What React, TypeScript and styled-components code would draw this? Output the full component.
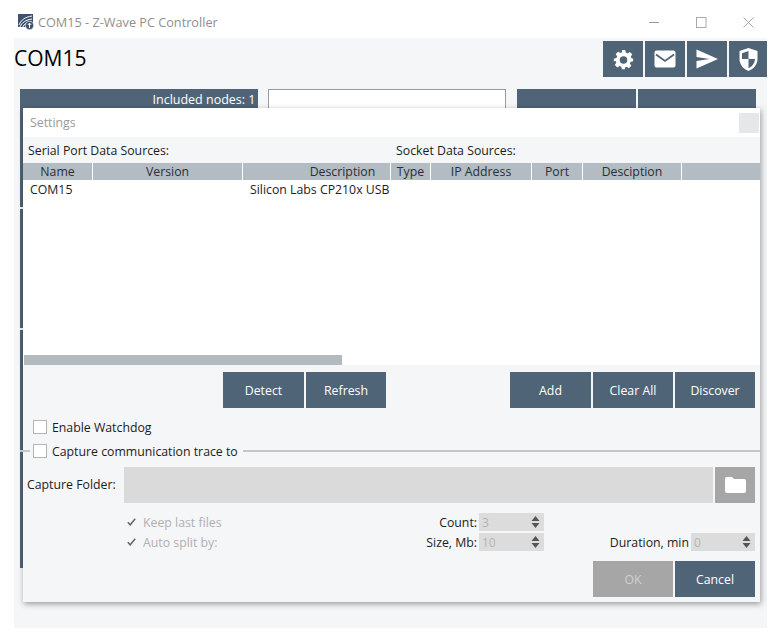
import React from "react";
import styled, { createGlobalStyle } from "styled-components";

const Global = createGlobalStyle`
  html, body { margin: 0; padding: 0; background: #fff; }
  body { font-family: "Open Sans", "Noto Sans", sans-serif; font-size: 12.3px; color: #1c1c1c; }
  * { box-sizing: border-box; }
`;

const Win = styled.div`
  width: 779px;
  height: 632px;
  overflow: hidden;
  background: #fff;
`;
const TitleBar = styled.div`
  height: 38px;
  display: flex;
  align-items: center;
  padding: 6px 0 0 18px;
`;
const TitleText = styled.span`
  margin-left: 4px;
  font-size: 12.7px;
  color: #8f8f8f;
`;
const WinControls = styled.div`
  margin-left: auto;
  display: flex;
  gap: 36px;
  padding-right: 25px;
`;
const Body = styled.div`
  position: relative;
  margin-left: 14px;
  width: 753px;
  height: 590px;
  background: #f5f6f7;
  padding-top: 3px;
`;
const HeaderRow = styled.div`
  display: flex;
  justify-content: space-between;
  align-items: center;
  height: 36px;
`;
const Heading = styled.h1`
  margin: 0 0 2px 0;
  font-size: 21px;
  font-weight: 400;
  color: #000;
`;
const Toolbar = styled.div`
  display: flex;
  gap: 2px;
`;
const ToolButton = styled.div<{ $w?: number }>`
  width: ${(p) => p.$w ?? 40}px;
  height: 36px;
  background: #506478;
  display: flex;
  align-items: center;
  justify-content: center;
`;
const Backdrop = styled.div`
  display: flex;
  margin: 12px 11px 0 6px;
  gap: 10px;
`;
const SideColumn = styled.div`
  width: 238px;
  display: flex;
  flex-direction: column;
  gap: 2px;
`;
const SideBlock = styled.div<{ $h: number }>`
  height: ${(p) => p.$h}px;
  background: #506478;
  color: #fff;
  text-align: right;
  padding: 2px 2px 0 0;
  font-size: 12.5px;
`;
const SearchBox = styled.div`
  width: 239px;
  height: 32px;
  background: #fff;
  border: 1px solid #9a9a9a;
`;
const NodeButtons = styled.div`
  display: flex;
  gap: 2px;
  margin-left: 1px;
`;
const NodeButton = styled.div`
  width: 118.5px;
  height: 32px;
  background: #506478;
`;
const Dialog = styled.div`
  position: absolute;
  left: 9px;
  top: 70px;
  width: 737px;
  height: 494px;
  background: #f5f6f7;
  box-shadow: 1px 2px 6px rgba(0, 0, 0, 0.38);
  display: flex;
  flex-direction: column;
`;
const DialogTitle = styled.div`
  height: 29px;
  flex: none;
  background: #fff;
  display: flex;
  align-items: center;
  justify-content: space-between;
  padding: 0 1px 0 7px;
  color: #9a9a9a;
`;
const CloseBox = styled.div`
  width: 20px;
  height: 20px;
  background: #e6e7e8;
`;
const SourceLabels = styled.div`
  height: 26px;
  flex: none;
  display: flex;
  align-items: center;
  padding: 1px 0 0 5px;
`;
const SerialLabel = styled.span`
  width: 368px;
`;
const Table = styled.div`
  height: 202px;
  flex: none;
  background: #fff;
  position: relative;
  display: flex;
  flex-direction: column;
`;
const ColGrid = styled.div`
  display: grid;
  grid-template-columns: 69px 149px 147px 39px 100px 50px 98px 78px;
  column-gap: 1px;
`;
const HeaderCell = styled.div<{ $shift?: number }>`
  height: 17px;
  background: #b3bcc3;
  text-align: center;
  line-height: 17px;
  color: #2b2f33;
  padding-left: ${(p) => p.$shift ?? 0}px;
`;
const BodyCell = styled.div<{ $indent: number }>`
  padding-left: ${(p) => p.$indent}px;
  line-height: 20px;
  white-space: nowrap;
`;
const ScrollThumb = styled.div`
  position: absolute;
  left: 1px;
  bottom: 0;
  width: 318px;
  height: 10px;
  background: #b3babe;
`;
const ActionRow = styled.div`
  display: flex;
  padding: 7px 0 0 200px;
  gap: 2px;
  flex: none;
`;
const ActionSpacer = styled.div`
  width: 120px;
`;
const Btn = styled.div<{ $disabled?: boolean; $w?: number }>`
  width: ${(p) => p.$w ?? 80}px;
  height: 36px;
  flex: none;
  background: ${(p) => (p.$disabled ? "#a6a6a6" : "#506478")};
  color: ${(p) => (p.$disabled ? "#d0d0d0" : "#fff")};
  display: flex;
  align-items: center;
  justify-content: center;
`;
const CheckRow = styled.label`
  display: flex;
  align-items: center;
  gap: 5px;
  height: 16px;
  margin: 11px 0 0 10px;
`;
const CheckBox = styled.span`
  width: 14px;
  height: 14px;
  background: #fff;
  border: 1px solid #b5b5b5;
  flex: none;
`;
const Legend = styled.div`
  display: flex;
  align-items: center;
  height: 14px;
  margin-top: 9px;
  gap: 5px;
  position: relative;
  left: -3px;
  width: 740px;
`;
const LegendStub = styled.span`
  width: 10px;
  height: 2px;
  background: #c6c6c6;
  flex: none;
  margin-right: -2px;
`;
const LegendLine = styled.span`
  flex: 1;
  height: 2px;
  background: #c6c6c6;
`;
const FolderRow = styled.div`
  display: flex;
  align-items: center;
  padding: 0 5px 0 4px;
  margin-top: 9px;
  height: 36px;
`;
const FolderLabel = styled.span`
  width: 97px;
  flex: none;
  padding-bottom: 2px;
`;
const FolderInput = styled.div`
  flex: 1;
  height: 36px;
  background: #dadada;
`;
const FolderButton = styled.div`
  width: 40px;
  height: 36px;
  margin-left: 2px;
  background: #a6a6a6;
  display: flex;
  align-items: center;
  justify-content: center;
`;
const OptionGrid = styled.div`
  display: grid;
  grid-template-columns: 120px 235px 65px 147px 64px;
  grid-auto-rows: 18px;
  row-gap: 2px;
  margin: 10px 0 0 101px;
  align-items: center;
`;
const CheckedOption = styled.div`
  display: flex;
  align-items: center;
  gap: 7px;
  padding-left: 3px;
  color: #b0b0b0;
`;
const OptionLabel = styled.div`
  text-align: right;
  padding-right: 2px;
  white-space: nowrap;
`;
const Spin = styled.div`
  height: 18px;
  background: #dcdcdc;
  color: #b4b4b4;
  display: flex;
  align-items: center;
  justify-content: space-between;
  padding: 0 4px 0 3px;
  font-size: 12px;
`;
const SpinArrows = styled.svg`
  width: 9px;
  height: 14px;
`;
const EmptyCell = styled.div``;
const FooterRow = styled.div`
  display: flex;
  justify-content: flex-end;
  gap: 2px;
  padding: 10px 5px 0 0;
`;

const Arrows = () => (
  <SpinArrows viewBox="0 0 9 14">
    <path d="M4.5 1 8.5 6H.5zM.5 8h8l-4 5z" fill="#555" />
  </SpinArrows>
);

const Gear = () => (
  <svg width="21" height="21" viewBox="0 0 24 24" fill="#fff">
    <path fillRule="evenodd" d="M10 1h4l.6 3.1c.7.2 1.3.5 1.900.9l2.700-1.700 2.800 2.800-1.700 2.700c.4.6.7 1.200.9 1.900L23 11v3l-2.800.7c-.2.6-.5 1.200-.9 1.800l1.700 2.700-2.800 2.800-2.700-1.700c-.6.4-1.200.7-1.900.9L13.900 23h-3.800l-.6-2.800c-.7-.2-1.300-.5-1.900-.9l-2.700 1.700-2.800-2.800 1.700-2.700c-.4-.6-.7-1.200-.9-1.800L1 14v-3l2.900-.6c.2-.7.5-1.300.9-1.900L3.100 5.800l2.800-2.800L8.600 4.700c.6-.4 1.200-.7 1.900-.9L10 1zm2 7.200a4.300 4.300 0 1 0 0 8.600 4.300 4.300 0 0 0 0-8.600z" />
  </svg>
);
const Mail = () => (
  <svg width="22" height="18" viewBox="0 0 22 18">
    <rect x="0.500" y="0.500" width="21" height="17" rx="2" fill="#fff" />
    <path d="M2 4.500 11 11l9-6.500" fill="none" stroke="#506478" strokeWidth="1.800" />
  </svg>
);
const Send = () => (
  <svg width="22" height="20" viewBox="0 0 22 20">
    <path d="M0.500 0.500 22 10 .5 19.500V12l13-2-13-2z" fill="#fff" />
  </svg>
);
const Shield = () => (
  <svg width="19" height="23" viewBox="0 0 19 23">
    <path
      fillRule="evenodd"
      d="M9.500 0 18.500 3v8c0 5.500-3.700 9.700-9 12-5.300-2.300-9-6.500-9-12V3zM9.500 3 3 5.200V11h6.500zM9.500 11v9.300c3.700-1.900 6.300-5 6.500-9.300z"
      fill="#fff"
    />
  </svg>
);
const FolderIcon = () => (
  <svg width="21" height="16" viewBox="0 0 21 16">
    <path d="M0 2a2 2 0 0 1 2-2h5l2 2h10a2 2 0 0 1 2 2v10a2 2 0 0 1-2 2H2a2 2 0 0 1-2-2z" fill="#fff" />
  </svg>
);
const Tick = () => (
  <svg width="9" height="8" viewBox="0 0 9 8">
    <path d="M.8 4.200 3.200 6.800 8.200.8" fill="none" stroke="#666" strokeWidth="1.500" />
  </svg>
);
const AppIcon = () => (
  <svg width="16" height="16" viewBox="0 0 16 16">
    <rect x="0" y="0" width="15" height="13" fill="#3d5170" />
    <path d="M1 11C3 6 7 3 14 2M2 13C4 8 8 6 14 5M5 13C6 10 9 8 14 8" fill="none" stroke="#fff" strokeWidth="1" />
    <circle cx="11.500" cy="11.500" r="4.200" fill="#3d5170" stroke="#fff" strokeWidth="0.600" />
    <path d="M11.500 9v5M9.800 11l1.700-2 1.700 2" fill="none" stroke="#fff" strokeWidth="1" />
  </svg>
);
const MinIcon = () => (
  <svg width="11" height="11" viewBox="0 0 11 11">
    <path d="M0 5.500h10" stroke="#999" />
  </svg>
);
const MaxIcon = () => (
  <svg width="11" height="11" viewBox="0 0 11 11">
    <rect x="0.500" y="0.500" width="9.500" height="10" fill="none" stroke="#aaa" />
  </svg>
);
const CloseIcon = () => (
  <svg width="11" height="11" viewBox="0 0 11 11">
    <path d="M.5.500l10 10M10.500.500l-10 10" stroke="#aaa" />
  </svg>
);

export default function App() {
  return (
    <Win>
      <Global />
      <TitleBar>
        <AppIcon />
        <TitleText>COM15 - Z-Wave PC Controller</TitleText>
        <WinControls>
          <MinIcon />
          <MaxIcon />
          <CloseIcon />
        </WinControls>
      </TitleBar>
      <Body>
        <HeaderRow>
          <Heading>COM15</Heading>
          <Toolbar>
            <ToolButton><Gear /></ToolButton>
            <ToolButton><Mail /></ToolButton>
            <ToolButton><Send /></ToolButton>
            <ToolButton $w={38}><Shield /></ToolButton>
          </Toolbar>
        </HeaderRow>
        <Backdrop>
          <SideColumn>
            <SideBlock $h={118}>Included nodes: 1</SideBlock>
            <SideBlock $h={119} />
            <SideBlock $h={238} />
          </SideColumn>
          <SearchBox />
          <NodeButtons>
            <NodeButton />
            <NodeButton />
          </NodeButtons>
        </Backdrop>
        <Dialog>
          <DialogTitle>
            <span>Settings</span>
            <CloseBox />
          </DialogTitle>
          <SourceLabels>
            <SerialLabel>Serial Port Data Sources:</SerialLabel>
            <span>Socket Data Sources:</span>
          </SourceLabels>
          <Table>
            <ColGrid>
              <HeaderCell>Name</HeaderCell>
              <HeaderCell>Version</HeaderCell>
              <HeaderCell $shift={52}>Description</HeaderCell>
              <HeaderCell>Type</HeaderCell>
              <HeaderCell>IP Address</HeaderCell>
              <HeaderCell>Port</HeaderCell>
              <HeaderCell>Desciption</HeaderCell>
              <HeaderCell />
            </ColGrid>
            <ColGrid>
              <BodyCell $indent={7}>COM15</BodyCell>
              <BodyCell $indent={0} />
              <BodyCell $indent={7}>Silicon Labs CP210x USB</BodyCell>
            </ColGrid>
            <ScrollThumb />
          </Table>
          <ActionRow>
            <Btn $w={81}>Detect</Btn>
            <Btn>Refresh</Btn>
            <ActionSpacer />
            <Btn $w={81}>Add</Btn>
            <Btn>Clear All</Btn>
            <Btn>Discover</Btn>
          </ActionRow>
          <CheckRow>
            <CheckBox />
            Enable Watchdog
          </CheckRow>
          <Legend>
            <LegendStub />
            <CheckBox />
            Capture communication trace to
            <LegendLine />
          </Legend>
          <FolderRow>
            <FolderLabel>Capture Folder:</FolderLabel>
            <FolderInput />
            <FolderButton><FolderIcon /></FolderButton>
          </FolderRow>
          <OptionGrid>
            <CheckedOption><Tick />Keep last files</CheckedOption>
            <OptionLabel>Count:</OptionLabel>
            <Spin>3<Arrows /></Spin>
            <EmptyCell />
            <EmptyCell />
            <CheckedOption><Tick />Auto split by:</CheckedOption>
            <OptionLabel>Size, Mb:</OptionLabel>
            <Spin>10<Arrows /></Spin>
            <OptionLabel>Duration, min</OptionLabel>
            <Spin>0<Arrows /></Spin>
          </OptionGrid>
          <FooterRow>
            <Btn $disabled>OK</Btn>
            <Btn>Cancel</Btn>
          </FooterRow>
        </Dialog>
      </Body>
    </Win>
  );
}
